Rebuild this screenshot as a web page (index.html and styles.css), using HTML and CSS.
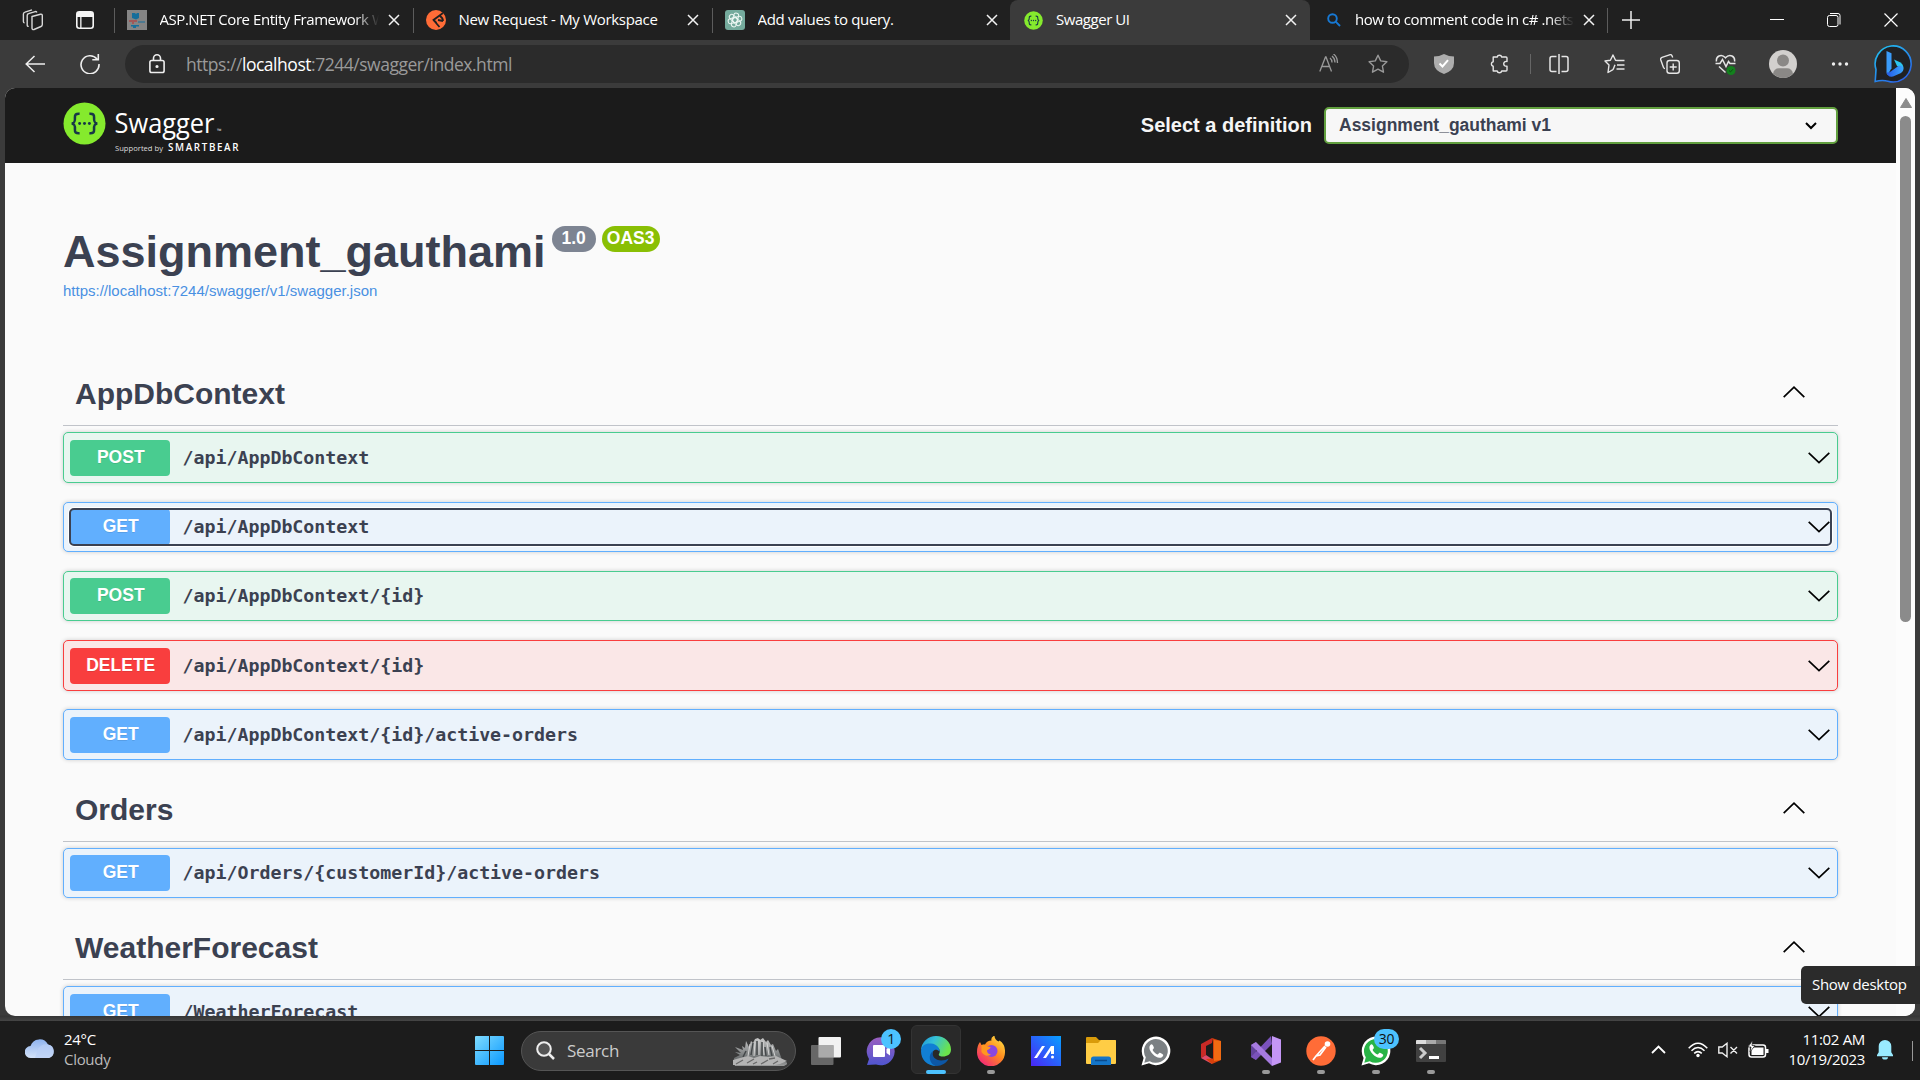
FILE: index.html
```html
<!DOCTYPE html>
<html lang="en">
<head>
<meta charset="utf-8">
<title>Swagger UI</title>
<link rel="stylesheet" href="styles.css">
</head>
<body>
<svg width="0" height="0" class="defs">
  <defs>
    <symbol id="x" viewBox="0 0 12 12"><path d="M1 1l10 10M11 1L1 11" fill="none" stroke="#f2f2f2" stroke-width="1.5"/></symbol>
    <symbol id="down" viewBox="0 0 22 12"><path d="M.7 .8L11 10.6 21.3 .8" fill="none" stroke="#000" stroke-width="1.7"/></symbol>
    <symbol id="up" viewBox="0 0 22 12"><path d="M.7 11.2L11 1.2 21.3 11.2" fill="none" stroke="#000" stroke-width="1.7"/></symbol>
    <symbol id="braces" viewBox="0 0 44 44">
      <circle cx="22" cy="22" r="21.5" fill="#85ea2d"/>
      <path d="M17 12c-4-.3-5 1-4.800 4 .2 3.500 0 5.400-3.200 6 3.200.6 3.400 2.500 3.200 6-.2 3 .8 4.300 4.800 4M27 12c4-.3 5 1 4.800 4-.2 3.500 0 5.400 3.200 6-3.200.6-3.400 2.500-3.200 6 .2 3-.8 4.300-4.800 4" fill="none" stroke="#173647" stroke-width="2.600"/>
      <circle cx="17" cy="22" r="1.500" fill="#173647"/><circle cx="22" cy="22" r="1.500" fill="#173647"/><circle cx="27" cy="22" r="1.500" fill="#173647"/>
    </symbol>
    <symbol id="phone" viewBox="0 0 30 30">
      <path d="M.5 29.500l2.100-7.600A14.300 14.300 0 1 1 8 27.300z" fill="#fff"/>
      <path d="M3.300 26.700l1.500-5.400A11.900 11.900 0 1 1 8.800 25.200z" fill="currentColor"/>
      <path d="M10.600 8.300c-.8 0-2.300 1.300-2.200 3.500.1 4.300 6 9.900 10 10 2.300 0 3.800-1.400 3.900-2.900 0-.6-3.300-2.500-3.900-2.200-.7.300-1.200 2-2 1.800-1.800-.5-4.200-3-4.800-4.400-.2-.7 1.300-1.500 1.300-2.200 0-.7-1.100-3.600-2.300-3.600z" fill="#fff"/>
    </symbol>
  </defs>
</svg>

<div class="tabs">
  <div class="tools">
    <svg width="22" height="22" viewBox="0 0 22 22" fill="none" stroke="#d8d8d8" stroke-width="1.4"><path d="M10 7.500l8.500-2.300c1-.2 1.800.3 1.800 1.300v9c0 1-.5 1.700-1.300 2l-7 3c-1 .4-2-.2-2-1.300zM14.800 3.500c-.2-.8-.8-1.100-1.600-.9L6.500 4.700c-.8.2-1.300.8-1.300 1.700V16c0 1 .6 1.500 1.500 1.400M10 .9L3 3.200C2 3.500 1.400 4 1.400 5v7.500c0 .9.400 1.400 1.200 1.400"/></svg>
    <svg class="vt" width="18" height="18" viewBox="0 0 18 18"><rect x=".8" y=".8" width="16.400" height="16.400" rx="2.500" fill="none" stroke="#f5f5f5" stroke-width="1.600"/><path d="M1 2.500Q1 1 3 1h12q2 0 2 1.500V6H1zM4.200 6h1.300v11H4.200z" fill="#f5f5f5"/></svg>
  </div>
  <div class="tab first">
    <svg width="20" height="20" viewBox="0 0 20 20"><path fill="#858585" d="M0 0h20v20H0z"/><path fill="#166e9b" d="M5 3h3l1 1 1-1h2v5l-3 1.500L5 8zM4 15h8v1.500H9V18H6v-1.500H4zM11 11.500h7v1h-7z"/><path fill="#ad4545" d="M2 10h8v2H7v2H5v-2H2z" opacity=".7"/></svg>
    <span class="name fade">ASP.NET Core Entity Framework W</span>
    <svg class="cl" width="12" height="12"><use href="#x"/></svg>
  </div>
  <div class="tab pm">
    <svg width="20" height="20" viewBox="0 0 20 20"><circle cx="10" cy="10" r="10" fill="#ff6c37"/><path d="M17 3L7.500 10l6 7M12 10l5 1M7.500 10l3 3M14 6q3 2 3 5" fill="none" stroke="#202020" stroke-width="1.800"/></svg>
    <span class="name">New Request - My Workspace</span>
    <svg class="cl" width="12" height="12"><use href="#x"/></svg>
  </div>
  <div class="tab gpt">
    <svg width="20" height="20" viewBox="0 0 20 20"><rect width="20" height="20" rx="3" fill="#74aa9c"/><g fill="none" stroke="#eaf5f1" stroke-width="1"><rect x="7.500" y="3" width="5" height="9.500" rx="2.500" transform="rotate(15 10 10)"/><rect x="7.500" y="3" width="5" height="9.500" rx="2.500" transform="rotate(75 10 10)"/><rect x="7.500" y="3" width="5" height="9.500" rx="2.500" transform="rotate(135 10 10)"/><rect x="7.500" y="3" width="5" height="9.500" rx="2.500" transform="rotate(195 10 10)"/><rect x="7.500" y="3" width="5" height="9.500" rx="2.500" transform="rotate(255 10 10)"/><rect x="7.500" y="3" width="5" height="9.500" rx="2.500" transform="rotate(315 10 10)"/></g></svg>
    <span class="name">Add values to query.</span>
    <svg class="cl" width="12" height="12"><use href="#x"/></svg>
  </div>
  <div class="tab active">
    <svg width="19" height="19"><use href="#braces"/></svg>
    <span class="name">Swagger UI</span>
    <svg class="cl" width="12" height="12"><use href="#x"/></svg>
  </div>
  <div class="tab search">
    <svg width="14" height="14" viewBox="0 0 14 14" fill="none" stroke="#1779d4" stroke-width="1.900"><circle cx="5.500" cy="5.500" r="4.300"/><path d="M8.700 8.700L13 13"/></svg>
    <span class="name fade">how to comment code in c# .netsc</span>
    <svg class="cl" width="12" height="12"><use href="#x"/></svg>
  </div>
  <svg class="plus" width="18" height="18" viewBox="0 0 18 18"><path d="M9 0v18M0 9h18" stroke="#eee" stroke-width="1.500"/></svg>
  <div class="win">
    <svg width="14" height="14" viewBox="0 0 14 14"><path d="M0 6.500h14" stroke="#fff"/></svg>
    <svg width="14" height="14" viewBox="0 0 14 14" fill="none" stroke="#fff"><rect x=".5" y="2.500" width="10.500" height="11" rx="2"/><path d="M3 .5h8q2 0 2 2v9"/></svg>
    <svg width="14" height="14" viewBox="0 0 14 14"><path d="M.5.5l13 13M13.500.5l-13 13" stroke="#fff" stroke-width="1.200"/></svg>
  </div>
</div>

<div class="toolbar">
  <svg class="back" width="20" height="18" viewBox="0 0 20 18" fill="none" stroke="#eee" stroke-width="1.500"><path d="M9.500 1L1.200 9l8.300 8M1.200 9H20"/></svg>
  <svg class="reload" width="20" height="20" viewBox="0 0 20 20" fill="none" stroke="#eee" stroke-width="1.600"><path d="M17 5A9 9 0 1 0 19 10M18.300 0v5.700h-6"/></svg>
  <div class="omni">
    <svg width="16" height="20" viewBox="0 0 16 20" fill="none" stroke="#eee" stroke-width="1.600"><rect x=".9" y="6.500" width="14.200" height="12" rx="1.800"/><path d="M4.500 6.500V4.300a3.500 3.500 0 0 1 7 0v2.200"/><circle cx="8" cy="12.500" r=".8" fill="#eee"/></svg>
    <span class="url">https://<b>localhost</b>:7244/swagger/index.html</span>
    <svg class="read" width="20" height="20" viewBox="0 0 20 20" fill="none" stroke="#999" stroke-width="1.300"><path d="M.8 17.500L6.500 3h.5l5.500 14.500M3 12.500h7.500M11 4q2 1.500 2 4.500M13 2q3 2.500 3 6.500M14.500 0q4 3 4 9"/></svg>
    <svg width="20" height="20" viewBox="0 0 20 20" fill="none" stroke="#999" stroke-width="1.400" stroke-linejoin="round"><path d="M10 1.200l2.700 5.700 6.200.8-4.500 4.300 1.100 6.200L10 15.200l-5.500 3 1.100-6.200L1.100 7.700l6.200-.8z"/></svg>
  </div>
  <div class="acts">
    <svg width="20" height="20" viewBox="0 0 20 20"><path d="M10 0q5 2.500 10 2.500V9q0 7.500-10 11Q0 16.500 0 9V2.500Q5 2.500 10 0z" fill="#adadad"/><path d="M5.500 9.500l3 3 5.500-6.300" fill="none" stroke="#fff" stroke-width="2"/></svg>
    <svg width="20" height="20" viewBox="0 0 20 20" fill="none" stroke="#e6e6e6" stroke-width="1.400" stroke-linejoin="round"><path d="M4.200 3h4a2.300 2.300 0 0 1 4.500 0H17q1 0 1 1v3.500q-3-.5-3.300 2.300.3 2.700 3.300 2.300V16q0 1-1 1h-4.300a2.300 2.300 0 0 1-4.500 0h-4v-4.800a2.300 2.300 0 0 1 0-4.500z"/></svg>
    <i class="bar"></i>
    <svg width="20" height="20" viewBox="0 0 20 20" fill="none" stroke="#e6e6e6" stroke-width="1.500"><path d="M7.500 2.500H3q-2 0-2 2v11q0 2 2 2h4.500M12.500 2.500H17q2 0 2 2v11q0 2-2 2h-4.500M10 0v20"/></svg>
    <svg width="21" height="20" viewBox="0 0 21 20" fill="none" stroke="#e6e6e6" stroke-width="1.400" stroke-linejoin="round"><path d="M13.500 6.500l-2-.3L9 1 6.400 6.300 1 7l4 4-1 7.500 5-2.800M12.500 6.500h8M13 11h7.500M12.500 15h8"/><path d="M9 15.700l2-5"/></svg>
    <svg width="20" height="20" viewBox="0 0 20 20" fill="none" stroke="#e6e6e6" stroke-width="1.400"><rect x="7" y="6.500" width="12.300" height="12.800" rx="2.500"/><path d="M13.200 9.500v7M9.700 13h7M5 14.500q-1 0-1.500-1L.8 6q-.6-2 1.200-2.700L9.500.8q1.800-.6 2.500 1l.7 1.700"/></svg>
    <svg width="21" height="21" viewBox="0 0 21 21" fill="none" stroke="#e6e6e6" stroke-width="1.500"><path d="M1.500 7.500Q.8 3.500 4 2q3.500-1.500 6.500 1.800Q13.500.5 17 2q3.200 1.500 2.500 5.500M.5 9.500h4.500l2.500-4 3.500 7 2.500-5 1.500 2H20.500M4 12.500l6.500 6"/><circle cx="16" cy="16.500" r="4.500" fill="#13801d" stroke="none"/><path d="M14 16.500l1.500 1.400 2.500-2.700" stroke="#0b4c11" stroke-width="1"/></svg>
    <svg class="av" width="28" height="28" viewBox="0 0 28 28"><circle cx="14" cy="14" r="14" fill="#d2d0ce"/><circle cx="14" cy="10.500" r="6" fill="#8a8886"/><path d="M4 23.700Q5 18.200 10 18.200h8q5 0 6 5.500A14 14 0 0 1 4 23.700z" fill="#8a8886"/></svg>
    <svg class="dots" width="18" height="4" viewBox="0 0 18 4" fill="#eee"><circle cx="2.500" cy="2" r="1.700"/><circle cx="9" cy="2" r="1.700"/><circle cx="15.500" cy="2" r="1.700"/></svg>
    <svg class="bing" width="38" height="38" viewBox="0 0 38 38"><defs><linearGradient id="bb" x2=".7" y2="1"><stop stop-color="#20c8f2"/><stop offset="1" stop-color="#2a63e8"/></linearGradient><linearGradient id="bs" x1="0" x2="1"><stop stop-color="#2457e6"/><stop offset="1" stop-color="#3aa8ff"/></linearGradient></defs><path d="M1.200 36.500l.8-12A18 18 0 1 1 14 36.200q-6-1.500-12.800.3z" fill="#202124" stroke="url(#bb)" stroke-width="1.600"/><path d="M12.500 6l5 2.200v15L13.500 30q-1-1-1-3z" fill="#3a9bfa"/><path d="M20 14.500l6 2.800q3.500 2 3.500 6.200L23 21z" fill="#2cc4ee"/><path d="M12.700 27.500Q15 28 17.500 26l7.500-5.500q4.500 0 4.500 3.500 0 2.500-2.500 4l-8 3.500q-5.500 1-6.300-4z" fill="url(#bs)"/></svg>
  </div>
</div>

<div class="frame">
<div class="view">
  <div class="page">
    <header class="topbar">
      <svg width="180" height="56" viewBox="0 0 180 56">
        <use href="#braces" x="0" y="5" width="43" height="43"/>
        <text x="51.500" y="36" class="sw" textLength="100" lengthAdjust="spacingAndGlyphs">Swagger</text>
        <text x="154" y="36" class="tm">™</text>
        <text x="52" y="53.500" class="sup" textLength="48" lengthAdjust="spacingAndGlyphs">Supported by</text>
        <text x="105" y="53.500" class="sb" textLength="70.500">SMARTBEAR</text>
      </svg>
      <div class="pick"><span>Select a definition</span>
        <div class="select">Assignment_gauthami v1
          <svg width="12" height="8" viewBox="0 0 12 8"><path d="M1 1l5 5 5-5" fill="none" stroke="#000" stroke-width="2"/></svg>
        </div>
      </div>
    </header>
    <main>
      <div class="info">
        <h1>Assignment_gauthami<span class="ver">1.0</span><span class="ver oas">OAS3</span></h1>
        <a>https://localhost:7244/swagger/v1/swagger.json</a>
      </div>
      <section>
        <h2>AppDbContext<svg width="22" height="12"><use href="#up"/></svg></h2>
        <div class="op post"><div class="in"><b>POST</b><code>/api/AppDbContext</code><svg width="22" height="12"><use href="#down"/></svg></div></div>
        <div class="op get focus"><div class="in"><b>GET</b><code>/api/AppDbContext</code><svg width="22" height="12"><use href="#down"/></svg></div></div>
        <div class="op post"><div class="in"><b>POST</b><code>/api/AppDbContext/{id}</code><svg width="22" height="12"><use href="#down"/></svg></div></div>
        <div class="op delete"><div class="in"><b>DELETE</b><code>/api/AppDbContext/{id}</code><svg width="22" height="12"><use href="#down"/></svg></div></div>
        <div class="op get"><div class="in"><b>GET</b><code>/api/AppDbContext/{id}/active-orders</code><svg width="22" height="12"><use href="#down"/></svg></div></div>
      </section>
      <section>
        <h2>Orders<svg width="22" height="12"><use href="#up"/></svg></h2>
        <div class="op get"><div class="in"><b>GET</b><code>/api/Orders/{customerId}/active-orders</code><svg width="22" height="12"><use href="#down"/></svg></div></div>
      </section>
      <section>
        <h2>WeatherForecast<svg width="22" height="12"><use href="#up"/></svg></h2>
        <div class="op get"><div class="in"><b>GET</b><code>/WeatherForecast</code><svg width="22" height="12"><use href="#down"/></svg></div></div>
      </section>
    </main>
  </div>
  <div class="scroll">
    <svg width="12" height="10" viewBox="0 0 12 10"><path d="M6 .5L11.500 9.500H.5z" fill="#8b8b8b" stroke="#8b8b8b" stroke-linejoin="round"/></svg>
    <div class="thumb"></div>
  </div>
</div>
</div>

<div class="taskbar">
  <div class="weather">
    <svg width="31" height="21" viewBox="0 0 31 21"><defs><linearGradient id="cl" x2="0" y2="1"><stop stop-color="#8fb3ee"/><stop offset="1" stop-color="#d4e2f8"/></linearGradient></defs><path d="M6 20a6 6 0 0 1-.5-12A9.500 9.500 0 0 1 23 6.500 7 7 0 0 1 24 20z" fill="url(#cl)"/><path d="M13 11q4-6 10-4.500a7 7 0 0 1 1 13.500H10z" fill="#b9cff5" opacity=".7"/></svg>
    <div class="temp"><p>24°C</p><p class="dim">Cloudy</p></div>
  </div>
  <div class="apps">
    <div class="app"><svg width="29" height="29" viewBox="0 0 29 29"><defs><linearGradient id="wn" x2="1" y2="1"><stop stop-color="#7fdcff"/><stop offset="1" stop-color="#0a98ff"/></linearGradient></defs><path d="M1 0h13v14H0V1q0-1 1-1zM15 0h13q1 0 1 1v13H15zM0 15h14v14H1q-1 0-1-1zM15 15h14v13q0 1-1 1H15z" fill="url(#wn)"/></svg></div>
    <div class="find">
      <svg width="19" height="19" viewBox="0 0 19 19" fill="none" stroke="#eee" stroke-width="2"><circle cx="8" cy="8" r="6.800" fill="#555"/><path d="M13 13l5 5" stroke-width="2.500"/></svg>
      <span>Search</span>
      <svg class="rock" width="54" height="30" viewBox="0 0 54 30"><defs><linearGradient id="rk" x2="0" y2="1"><stop stop-color="#c8c8c8"/><stop offset=".7" stop-color="#6d7172"/><stop offset="1" stop-color="#a0a0a0"/></linearGradient></defs><path d="M1 22l6-3-5-3 6 1-6-6 8 3-1-4 3 2 1-7 3 6 2-6 2 2 2-4 3-1 2 2 3-2 3 4 2-2 3 5 2-1 3 7 2-2 3 8 1 4 7 2-5 3-49 1z" fill="url(#rk)"/><path d="M15 20l2-12M21 20l1-14M26 19V3M31 19l-1-14M36 19l-2-12M42 20l-3-10" stroke="#d4d4d4" stroke-width="1"/><path d="M18 19l2-12M24 19V5M29 20V6M33 20l-1-9M39 20l-2-9M10 21l3-6" stroke="#44484a" stroke-width="1.500"/><path d="M0 29v-5l7-2 8-2 6 2 6-2 8 1 8-1 11 5-7 3-5 1z" fill="#b4b4b4"/><path d="M3 28l7-4M14 27l7-4M20 28l4-2M28 28l7-4M40 28l5-3M36 23l6-1" stroke="#6a6a6a" stroke-width="1.300"/></svg>
    </div>
    <div class="app"><svg width="30" height="28" viewBox="0 0 30 28"><rect x="7.500" width="22.500" height="20.500" rx="1" fill="#f2f2f2"/><rect y="8" width="22.500" height="20" rx="1" fill="#747474" opacity=".85"/><path d="M7.500 8h15v12.500h-15z" fill="#aaa"/></svg></div>
    <div class="app"><svg width="30" height="30" viewBox="0 0 30 30"><defs><linearGradient id="ch" x2="0" y2="1"><stop stop-color="#9a5fc0"/><stop offset="1" stop-color="#4f55cf"/></linearGradient></defs><path d="M1 29l2-6A14 14 0 1 1 10 28.500z" fill="url(#ch)"/><rect x="7" y="9" width="12" height="12" rx="1" fill="#fff"/><path d="M20.500 13l3.500-2.500v9L20.500 17z" fill="#fff"/></svg><em>1</em></div>
    <div class="app on"><svg width="30" height="30" viewBox="0 0 30 30"><defs><linearGradient id="eg" x2="1" y2=".4"><stop stop-color="#1b8fd8"/><stop offset=".45" stop-color="#35c1d8"/><stop offset="1" stop-color="#6be34c"/></linearGradient></defs><path d="M0 14A15 15 0 0 1 15 0c8.500 0 15 6 15 13.500 0 5-4 7-8 7-3 0-5-1-4-2.500 2-3 0-7.500-5-8C7 9.500 2 11 0 14z" fill="url(#eg)"/><path d="M0 15C.5 9 5 7 10 7.500c6 .5 9 5 8.500 8-2-2-5-2.500-6.500 0-2.500 4 1 14 3.500 14.500C6 30 0 23.500 0 15z" fill="#117fd4"/><path d="M12.200 15c-2.200 5 2.300 9.500 8 9.500 3 0 5.500-.8 7.500-2-2.500 4.700-7 7.500-12 7.500C8 29 6.500 18 12.200 15z" fill="#0d57a6"/></svg><i></i></div>
    <div class="app"><svg width="28" height="30" viewBox="0 0 28 30"><defs><linearGradient id="ff" x1="1" x2=".2" y2="1"><stop stop-color="#fff14a"/><stop offset=".5" stop-color="#ff8a1e"/><stop offset="1" stop-color="#f2227c"/></linearGradient></defs><path d="M3 6l1.500 3L8 8.500q2-4 6.500-4-1-3 3-5 0 4 4 6l1-1q6 4 5.500 12A14 14 0 0 1 0 16Q0 9.500 3 6z" fill="url(#ff)"/><circle cx="14.500" cy="15" r="6" fill="#8a47e0"/><path d="M4.500 9q3-1.500 6 1.500l3 .5q0 2-3.500 3.200Q10 18 14 18.500 9 22 4.500 16z" fill="#ff971f"/></svg><i></i></div>
    <div class="app"><svg width="30" height="30" viewBox="0 0 30 30"><defs><linearGradient id="ma" x1="0" y1="1" x2="1" y2="0"><stop stop-color="#4a25f5"/><stop offset="1" stop-color="#08a0ff"/></linearGradient></defs><path d="M0 0h30v30H0z" fill="url(#ma)"/><path d="M3 22l8-12h3L6 22zM12 22l8-12h3v8h-3v-3.500L15 22z" fill="#fff"/><circle cx="21.500" cy="21" r="1.500" fill="#fff"/></svg></div>
    <div class="app"><svg width="30" height="28" viewBox="0 0 30 28"><path d="M0 1q0-1 1-1h9l3 3h16q1 0 1 1v6H0z" fill="#d99b0a"/><path d="M0 6h12l3-3h14q1 0 1 1v22q0 1-1 1H1q-1 0-1-1z" fill="#ffcd45"/><path d="M5 28v-6q0-2.500 2.500-2.500h15Q25 19.500 25 22v6z" fill="#1475c8"/><path d="M9 23.500h12" stroke="#0a4b8d" stroke-width="1.500"/></svg></div>
    <div class="app grey"><svg width="30" height="30"><use href="#phone"/></svg></div>
    <div class="app"><svg width="22" height="26" viewBox="0 0 22 26"><path d="M1 6l11-6v5L6 8v9l-5 3z" fill="#c92a26"/><path d="M1 20l5-3 6 4v5z" fill="#e04a68"/><path d="M12 0l9 3v19l-9 4-6-5 7-.5V5z" fill="#d8400b"/><path d="M14 2l7 1v19l-7 1z" fill="#f06a12"/></svg></div>
    <div class="app"><svg width="30" height="30" viewBox="0 0 30 30"><path d="M0 9l5-3v18l-5-3z" fill="#63439c"/><path d="M5 24L0 21 20 0l1 8z" fill="#7a52bb"/><path d="M5 6L0 9l21 21v-8z" fill="#a67be0"/><path d="M21 0l9 3.500v23L21 30z" fill="#c496f5"/></svg><i></i></div>
    <div class="app"><svg width="30" height="30" viewBox="0 0 30 30"><circle cx="15" cy="15" r="14.700" fill="#ff6c37"/><circle cx="21.500" cy="8" r="2.800" fill="#fff"/><path d="M19 10L10 20l-3 4M20 11l-6 8-4 1" fill="none" stroke="#fff" stroke-width="1.700"/></svg><i></i></div>
    <div class="app green"><svg width="30" height="30"><use href="#phone"/></svg><em class="wide">30</em><i></i></div>
    <div class="app"><svg width="30" height="22" viewBox="0 0 30 22"><rect width="30" height="22" rx="1" fill="#414141"/><path d="M1 0h9v4H0V1q0-1 1-1z" fill="#ddd"/><path d="M10 0h10v4H10z" fill="#aaa"/><path d="M20 0h9q1 0 1 1v3H20z" fill="#777"/><path d="M4 8l5 5-5 5" fill="none" stroke="#ccc" stroke-width="3"/><path d="M13 16h10v3H13z" fill="#fff"/></svg><i></i></div>
  </div>
  <div class="tray">
    <svg class="tc" width="15" height="9" viewBox="0 0 15 9"><path d="M1 8l6.500-6.500L14 8" fill="none" stroke="#fff" stroke-width="1.800"/></svg>
    <svg width="20" height="16" viewBox="0 0 20 16" fill="none" stroke="#fff" stroke-width="1.500"><path d="M.7 6.200Q10-3.800 19.300 6.200M3.500 8.800q6.500-6.500 13 0M6.200 11.400q3.800-3.600 7.600 0"/><circle cx="10" cy="13.500" r="1.700" fill="#fff" stroke="none"/></svg>
    <svg width="20" height="16" viewBox="0 0 20 16" fill="none" stroke="#eee" stroke-width="1.400"><path d="M.8 5h3.400L9 1.300v13.400L4.200 11H.8zM12.500 5l6.500 6.500M19 5l-6.500 6.500"/></svg>
    <svg width="21" height="17" viewBox="0 0 21 17"><rect x="1" y="4" width="16.500" height="12" rx="2.500" fill="none" stroke="#fff" stroke-width="1.500"/><path d="M3.500 8l2.500-1.500h9.500v7.500h-12zM18 8h2.500v4H18z" fill="#fff"/><path d="M4.500-.5L0 6h3l-1 5 5-6.500H4z" fill="#fff" stroke="#1c1c1c" stroke-width=".7"/></svg>
    <div class="clock"><p>11:02 AM</p><p>10/19/2023</p></div>
    <svg width="16" height="20" viewBox="0 0 16 20"><path d="M8 0a6.300 6.300 0 0 1 6.300 6.300v6L16 15v1.300H0V15l1.700-2.700v-6A6.300 6.300 0 0 1 8 0zM5 17.300h6a3 2.300 0 0 1-6 0z" fill="#99ebff"/></svg>
    <i class="edge"></i>
  </div>
</div>
<div class="tip">Show desktop</div>
</body>
</html>
```
FILE: styles.css
```css
* { box-sizing: border-box; }
body {
  margin: 0; width: 1920px; height: 1080px; overflow: hidden;
  display: flex; flex-direction: column;
  background: #3b3b3b; color: #fff;
  font: 15px/20px "Open Sans", "Noto Sans", sans-serif;
}
svg { display: block; flex: none; }
svg.defs { position: absolute; }
p { margin: 0; }

/* tab strip */
.tabs { display: flex; height: 40px; flex: none; background: #202020; align-items: center; }
.tools { width: 114px; padding-left: 22px; display: flex; gap: 32px; align-items: center; }
.tab {
  position: relative; width: 299px; height: 40px; padding-left: 13px; flex: none;
  display: flex; align-items: center;
}
.tab::before { content: ""; position: absolute; left: 0; top: 8px; width: 1px; height: 25px; background: #5c5c5c; }
.tab.gpt { width: 298px; }
.tab.active { width: 300px; background: #3b3b3b; border-radius: 8px 8px 0 0; padding-left: 14px; }
.tab.search { width: 298px; padding-left: 17px; border-right: 1px solid transparent; }
.tab.active::before, .tab.search::before { display: none; }
.tab.search::after { content: ""; position: absolute; right: -1px; top: 8px; width: 1px; height: 25px; background: #5c5c5c; }
.name { margin: -2px 0 0 12.500px; width: 221px; overflow: hidden; white-space: nowrap; letter-spacing: -.45px; }
.pm .name { letter-spacing: -.3px; }
.gpt .name { letter-spacing: -.33px; }
.active .name { margin-left: 13px; }
.search .name { margin-left: 14px; width: 220px; }
.fade { -webkit-mask-image: linear-gradient(90deg, #000 195px, transparent 219px); mask-image: linear-gradient(90deg, #000 195px, transparent 219px); }
.cl { margin-left: 7.500px; }
.plus { margin-left: 14px; }
.win { margin-left: auto; display: flex; gap: 43px; padding-right: 22px; }

/* address bar */
.toolbar { display: flex; align-items: center; height: 48px; flex: none; padding: 0 8px 0 25px; }
.reload { margin-left: 35px; }
.omni {
  width: 1284px; height: 38px; margin-left: 25px; padding: 0 21px 0 24px; border-radius: 19px;
  background: #2b2b2b; display: flex; align-items: center;
}
.url { margin: -1px 0 0 21px; font-size: 17.500px; color: #9a9a9a; letter-spacing: -.47px; }
.url b { color: #fff; font-weight: 400; }
.read { margin: 0 29px 0 auto; }
.acts { flex: 1; display: flex; gap: 35px; align-items: center; padding-left: 25px; }
.bar { width: 1px; height: 20px; background: #666; margin: 0 -17px 0 -14px; }
.av { margin-left: -2px; }
.dots { margin-left: -1px; }
.bing { margin-left: auto; }
.acts > .bing { margin-right: 0; }
.acts > .dots { margin-right: -12px; }

/* browser viewport */
.frame { padding: 0 5px; flex: none; height: 933px; background: linear-gradient(#3b3b3b 927px, #353535 928px, #454545); }
.view { height: 928px; border-radius: 10px; overflow: hidden; display: flex; background: #fafafa; }
.page { width: 1891px; font-family: "Liberation Sans", Arial, sans-serif; color: #3b4151; }
.scroll { width: 19px; background: #fcfcfc; padding: 10px 0 0 4px; }
.thumb { width: 11px; height: 506px; margin-top: 8px; border-radius: 6px; background: #8b8b8b; }
.topbar { height: 75px; background: #1b1b1b; padding: 0 58px 1px; display: flex; justify-content: space-between; align-items: center; }
.sw { font: 28px "Open Sans", sans-serif; fill: #fff; }
.tm { font: 6px "Open Sans", sans-serif; fill: #ddd; }
.sup { font: 8px "Open Sans", sans-serif; fill: #ddd; }
.sb { font: 600 9.800px "Open Sans", sans-serif; fill: #fff; }
.pick { display: flex; align-items: center; gap: 12px; font-weight: 700; font-size: 20px; color: #f5f5f5; }
.select {
  width: 514px; height: 37px; padding: 0 19px 0 13px; border: 2px solid #62a03f; border-radius: 5px;
  background: #f7f7f7; color: #3b4151; font-size: 17.500px;
  display: flex; align-items: center; justify-content: space-between;
}
.select svg { margin-top: 2px; }
main { padding: 0 58px; }
.info { padding-top: 63px; height: 199.300px; }
h1 { margin: 0; height: 52px; font-size: 45px; line-height: 52px; display: flex; align-items: flex-start; }
.ver {
  height: 26px; width: 44px; border-radius: 13px; background: #7d8492; color: #fff; margin-left: 6px;
  font-size: 17.500px; line-height: 24px; text-align: center;
}
.oas { width: 58px; background: #89bf04; }
.info a { display: block; margin-top: 3px; font-size: 15px; line-height: 20px; color: #4990e2; }
h2 {
  margin: 0 0 6px; height: 64px; padding: 0 33.500px 0 12px; border-bottom: 1px solid #c0c3c9;
  font-size: 30px; line-height: 62px; display: flex; justify-content: space-between; align-items: center;
}
h2 svg { margin-top: -3px; }
section:not(:first-of-type) h2 { height: 63.250px; }
.op {
  height: 50.500px; margin-bottom: 18.750px; border: 1px solid; border-radius: 5px; padding: 6px;
  box-shadow: 0 0 4px rgba(0,0,0,.19);
}
.in { display: flex; align-items: center; height: 37px; padding-right: 1.500px; }
.in b {
  width: 100px; height: 36px; border-radius: 4px; color: #fff; font-size: 17.500px; line-height: 34px;
  text-align: center; text-shadow: 0 1px 0 rgba(0,0,0,.1); padding-left: 1.500px;
}
.in code { margin: 0 auto 0 12.500px; font: 700 18.300px/36px "DejaVu Sans Mono", monospace; letter-spacing: -.02px; }
.post { border-color: #49cc90; background: #e8f6f0; }
.post b { background: #49cc90; }
.get { border-color: #61affe; background: #ebf3fb; }
.get b { background: #61affe; }
.delete { border-color: #f93e3e; background: #fae7e7; }
.delete b { background: #f93e3e; }
.focus .in { height: 36px; outline: 2px solid #3b4151; outline-offset: -1px; border-radius: 4px; box-shadow: 0 0 0 2px #fff; }

/* taskbar */
.taskbar { height: 59px; flex: none; background: #1c1c1c; display: flex; align-items: center; letter-spacing: -.3px; }
.weather { width: 462px; padding-left: 25px; display: flex; gap: 8px; align-items: center; }
.weather svg { margin-top: -5px; }
.temp { margin-top: -4px; }
.dim { color: #bbb; }
.apps { display: flex; align-items: center; }
.app { position: relative; width: 55px; height: 59px; display: flex; align-items: center; justify-content: center; }
.find {
  width: 275px; height: 40px; margin: 0 2px 0 4px; padding: 0 8px 0 14px; border: 1px solid #555; border-radius: 20px;
  background: #3a3a3a; display: flex; align-items: center; gap: 12px; font-size: 17px; color: #ccc;
}
.rock { margin-left: auto; }
.app > i { position: absolute; bottom: 6px; left: 24px; width: 8px; height: 4px; border-radius: 2px; background: #999; }
.on::before { content: ""; position: absolute; inset: 4px 2px 6px 3px; background: #292929; border: 1px solid #333; border-radius: 6px; }
.app svg { position: relative; }
.on > i { left: 18px; width: 20px; background: #4cc2ff; }
.app em {
  position: absolute; left: 28px; top: 8px; width: 20px; height: 20px; border-radius: 10px; background: #4cc2ff;
  color: #111; font-style: normal; font-size: 14px; line-height: 20px; text-align: center;
}
.app em.wide { left: 26px; width: 25px; }
.grey { color: #7b8083; }
.green { color: #28b446; }
.tray { margin-left: auto; display: flex; align-items: center; padding-right: 7px; }
.tray svg { margin-top: -2px; }
.tc { margin-right: 22px; }
.tray svg + svg + svg { margin-left: 10px; }
.clock { width: 96px; text-align: right; margin: -4px 12px 0 0; letter-spacing: -.32px; }
.edge { width: 1px; height: 20px; background: #999; margin-left: 19px; }
.tip {
  position: absolute; left: 1801px; top: 966px; width: 119px; height: 38px; padding-left: 11px;
  background: #2b2b2b; border-radius: 5px 0 0 5px; line-height: 37px; letter-spacing: -.3px; white-space: nowrap;
}
```
